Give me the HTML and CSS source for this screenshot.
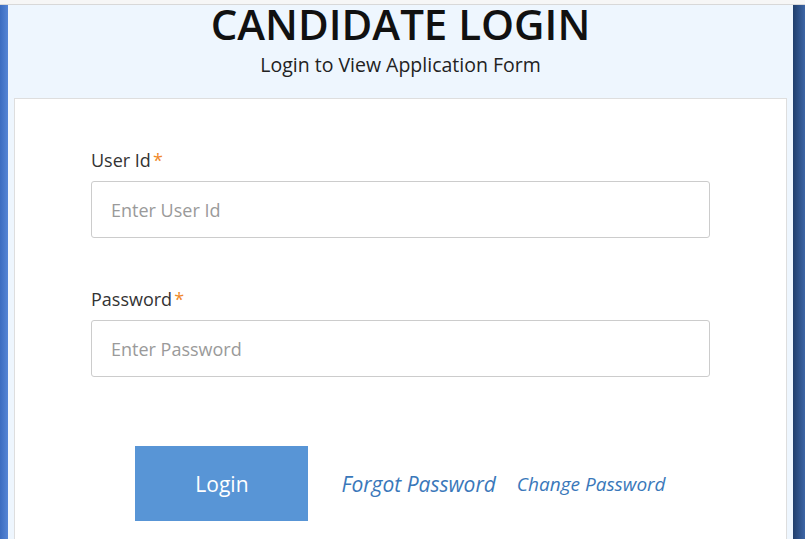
FILE: index.html
```html
<!DOCTYPE html>
<html>
<head>
<meta charset="utf-8">
<link rel="stylesheet" href="styles.css">
</head>
<body>
<div class="topband"></div>
<div class="frame">
  <div class="strip-left"></div>
  <div class="panel">
    <h1 class="title">CANDIDATE LOGIN</h1>
    <p class="subtitle">Login to View Application Form</p>
    <div class="card">
      <form class="form">
        <label class="label">User Id<span class="req">*</span></label>
        <input class="input" type="text" placeholder="Enter User Id">
        <label class="label label-2">Password<span class="req">*</span></label>
        <input class="input" type="password" placeholder="Enter Password">
        <div class="actions">
          <button class="btn" type="button">Login</button>
          <a class="link link-forgot" href="#">Forgot Password</a>
          <a class="link link-change" href="#">Change Password</a>
        </div>
      </form>
    </div>
  </div>
  <div class="strip-right"></div>
</div>
</body>
</html>
```
FILE: styles.css
```css
html, body {
  margin: 0;
  padding: 0;
  height: 539px;
  overflow: hidden;
  background: #ffffff;
  font-family: "Open Sans", "Liberation Sans", sans-serif;
}
.topband {
  height: 4px;
  background: #f6f6f6;
  border-bottom: 1px solid #d8d8d8;
}
.frame {
  display: flex;
  height: 534px;
}
.strip-left {
  width: 8px;
  background: linear-gradient(to right, #3b6cc0, #5585d5);
}
.strip-right {
  width: 12px;
  background: linear-gradient(to right, #203e6c, #3d66a6);
}
.panel {
  flex: 1;
  background: #eef6fe;
  padding: 0 6px;
  display: flex;
  flex-direction: column;
}
.title {
  margin: 0;
  text-align: center;
  font-size: 42px;
  line-height: 38px;
  font-weight: 600;
  color: #111111;
}
.subtitle {
  margin: 9px 0 0;
  text-align: center;
  font-size: 19.5px;
  line-height: 26px;
  color: #222222;
}
.card {
  margin-top: 20px;
  flex: 1;
  background: #ffffff;
  border: 1px solid #dedede;
  border-bottom: none;
}
.form {
  width: 619px;
  margin: 0 auto;
  padding-top: 49px;
  display: flex;
  flex-direction: column;
}
.label {
  font-size: 18px;
  line-height: 24px;
  color: #333333;
}
.label-2 {
  margin-top: 49px;
}
.req {
  color: #f0892a;
  margin-left: 2px;
}
.input {
  margin-top: 9px;
  box-sizing: border-box;
  height: 57px;
  width: 100%;
  border: 1px solid #cccccc;
  border-radius: 3px;
  padding: 0 19px;
  font-family: "Open Sans", "Liberation Sans", sans-serif;
  font-size: 18px;
  color: #333333;
  background: #ffffff;
  outline: none;
}
.input::placeholder {
  color: #9a9a9a;
}
.actions {
  margin-top: 69px;
  display: flex;
  align-items: center;
  justify-content: center;
}
.btn {
  width: 173px;
  height: 75px;
  border: none;
  background: #5895d6;
  color: #ffffff;
  font-family: "Open Sans", "Liberation Sans", sans-serif;
  font-size: 21px;
  padding: 0;
}
.link {
  font-style: italic;
  color: #3a78ba;
  text-decoration: none;
}
.link-forgot {
  margin-left: 33px;
  font-size: 21px;
}
.link-change {
  margin-left: 21px;
  font-size: 19px;
}
```
